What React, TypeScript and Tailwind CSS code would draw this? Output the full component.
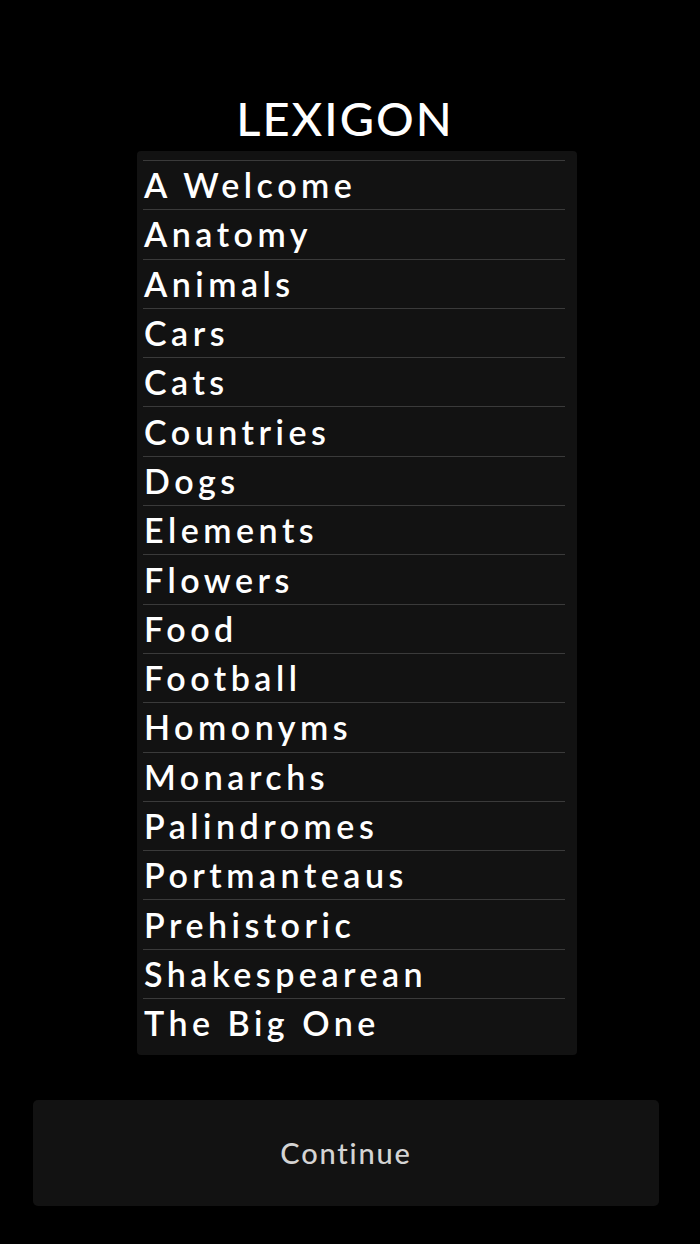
import React from "react";

const topics = [
  "A Welcome",
  "Anatomy",
  "Animals",
  "Cars",
  "Cats",
  "Countries",
  "Dogs",
  "Elements",
  "Flowers",
  "Food",
  "Football",
  "Homonyms",
  "Monarchs",
  "Palindromes",
  "Portmanteaus",
  "Prehistoric",
  "Shakespearean",
  "The Big One",
];

export default function App() {
  return (
    <div className="w-[700px] h-[1244px] bg-black flex flex-col items-center font-['Lato','Open_Sans',sans-serif] text-white">
      {/* Title */}
      <h1 className="mt-[92px] mr-[10px] h-[59px] text-[47px] leading-[52px] font-medium tracking-[2px] text-white">
        LEXIGON
      </h1>

      {/* Topic list */}
      <div className="ml-[14px] w-[440px] h-[904px] bg-[#121212] rounded-[4px] pt-[9px] pl-[6px] pr-[12px]">
        {topics.map((t) => (
          <div
            key={t}
            className="h-[49.3px] border-t border-[#3a3a3a] flex items-center pl-[1px] text-[34px] font-semibold tracking-[4.5px] leading-none whitespace-nowrap"
          >
            {t}
          </div>
        ))}
      </div>

      {/* Continue button */}
      <button className="mt-[45px] mr-[8px] w-[626px] h-[106px] bg-[#121212] rounded-[5px] flex items-center justify-center text-[29px] font-medium tracking-[1.8px] text-[#d4d4d4]">
        Continue
      </button>
    </div>
  );
}
